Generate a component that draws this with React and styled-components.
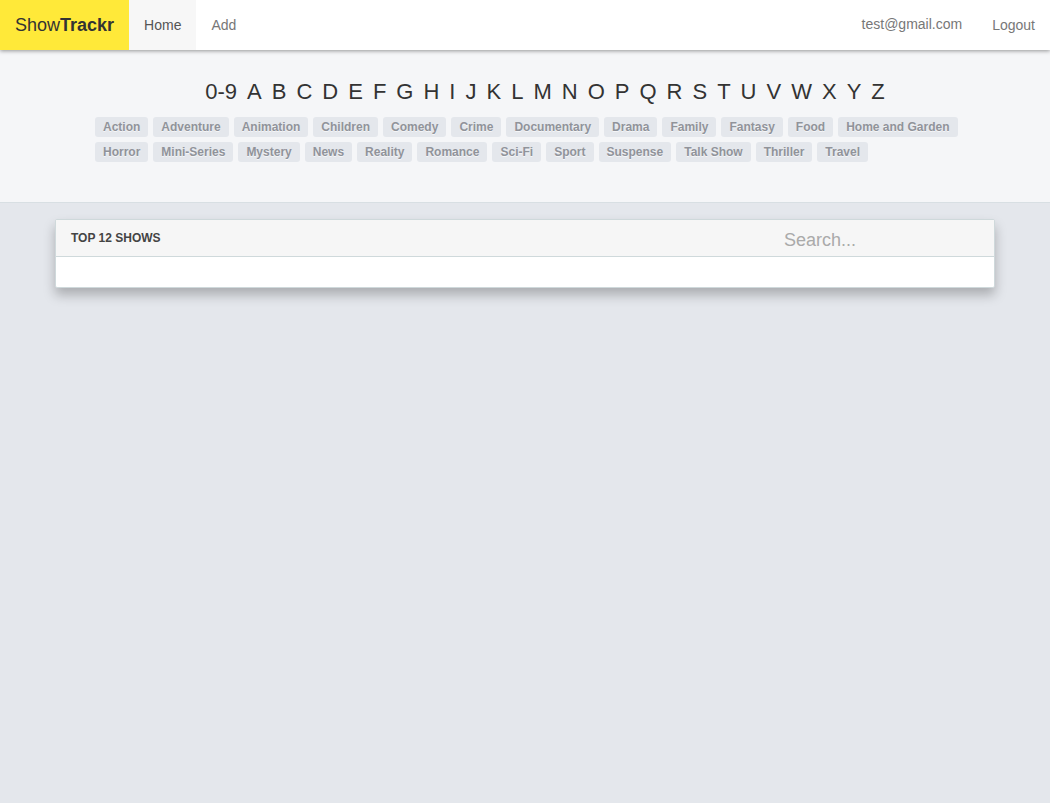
import React from "react";
import styled, { createGlobalStyle } from "styled-components";

const GlobalStyle = createGlobalStyle`
  *, *::before, *::after { box-sizing: border-box; }
  body {
    margin: 0;
    background: #e4e7ec;
    color: #333;
    font-family: "Liberation Sans", Arial, sans-serif;
    font-size: 14px;
    line-height: 20px;
  }
  a { color: inherit; text-decoration: none; }
`;

const Navbar = styled.nav`
  position: relative;
  display: flex;
  height: 50px;
  background: #fff;
  box-shadow: 0 1px 4px rgba(0, 0, 0, 0.4);
`;

const Brand = styled.a`
  padding: 15px;
  background: #ffe939;
  font-size: 18px;
`;

const NavList = styled.ul`
  display: flex;
  margin: 0;
  margin-left: ${(p) => (p.$right ? "auto" : "0")};
  padding: 0;
  list-style: none;
`;

const NavLink = styled.a`
  display: block;
  padding: 15px;
  color: ${(p) => (p.$active ? "#555" : "#777")};
  background: ${(p) => (p.$active ? "#f7f7f7" : "transparent")};
`;

const UserLabel = styled.span`
  display: block;
  padding: 14px 15px;
  color: #777;
`;

const Filters = styled.header`
  padding: 29px 15px 40px;
  background: #f5f6f8;
  border-bottom: 1px solid #d8dfe3;
`;

const Container = styled.div`
  max-width: 940px;
  margin: 0 auto;
`;

const Alphabet = styled.ul`
  display: flex;
  flex-wrap: wrap;
  justify-content: center;
  gap: 0 10px;
  margin: 0 0 12px;
  padding: 0 0 0 40px;
  list-style: none;
  font-size: 22px;
  line-height: 26px;
`;

const Genres = styled.ul`
  display: flex;
  flex-wrap: wrap;
  gap: 5px;
  margin: 0;
  padding: 0 0 0 40px;
  list-style: none;
`;

const GenreLink = styled.a`
  display: block;
  padding: 0 8px;
  border-radius: 3px;
  background: #e4e7ec;
  color: #90939a;
  font-size: 12px;
  font-weight: bold;
  text-shadow: 0 1px 0 #f5f6f8;
`;

const Main = styled.main`
  padding: 16px 15px 40px;
`;

const Panel = styled.section`
  background: #fff;
  border: 1px solid #cfd9db;
  border-radius: 2px;
  box-shadow: 0 7px 12px rgba(0, 0, 0, 0.25);
`;

const PanelHeading = styled.div`
  display: flex;
  justify-content: space-between;
  height: 37px;
  padding-left: 15px;
  background: #f6f6f6;
  border-bottom: 1px solid #cfd9db;
`;

const PanelTitle = styled.h1`
  margin: 0;
  color: #444;
  font-size: 12px;
  line-height: 36px;
  text-transform: uppercase;
`;

const SearchInput = styled.input`
  width: 210px;
  padding: 4px 0 0;
  border: 0;
  outline: 0;
  background: transparent;
  color: #333;
  font: inherit;
  font-size: 18px;
  &::placeholder { color: #aaa; opacity: 1; }
`;

const PanelBody = styled.div`
  padding: 15px;
`;

const letters = ["0-9", ..."ABCDEFGHIJKLMNOPQRSTUVWXYZ"];

const genres = [
  "Action", "Adventure", "Animation", "Children", "Comedy", "Crime",
  "Documentary", "Drama", "Family", "Fantasy", "Food", "Home and Garden",
  "Horror", "Mini-Series", "Mystery", "News", "Reality", "Romance",
  "Sci-Fi", "Sport", "Suspense", "Talk Show", "Thriller", "Travel",
];

export default function App() {
  return (
    <>
      <GlobalStyle />
      <Navbar>
        <Brand href="#home">Show<strong>Trackr</strong></Brand>
        <NavList>
          <li><NavLink href="#home" $active>Home</NavLink></li>
          <li><NavLink href="#add">Add</NavLink></li>
        </NavList>
        <NavList $right>
          <li><UserLabel>test@gmail.com</UserLabel></li>
          <li><NavLink href="#logout">Logout</NavLink></li>
        </NavList>
      </Navbar>
      <Filters>
        <Container>
          <Alphabet>
            {letters.map((l) => <li key={l}><a href={`#letter-${l}`}>{l}</a></li>)}
          </Alphabet>
          <Genres>
            {genres.map((g) => <li key={g}><GenreLink href="#genre">{g}</GenreLink></li>)}
          </Genres>
        </Container>
      </Filters>
      <Main>
        <Container>
          <Panel>
            <PanelHeading>
              <PanelTitle>Top 12 Shows</PanelTitle>
              <SearchInput type="text" aria-label="Search shows" placeholder="Search..." />
            </PanelHeading>
            <PanelBody />
          </Panel>
        </Container>
      </Main>
    </>
  );
}
